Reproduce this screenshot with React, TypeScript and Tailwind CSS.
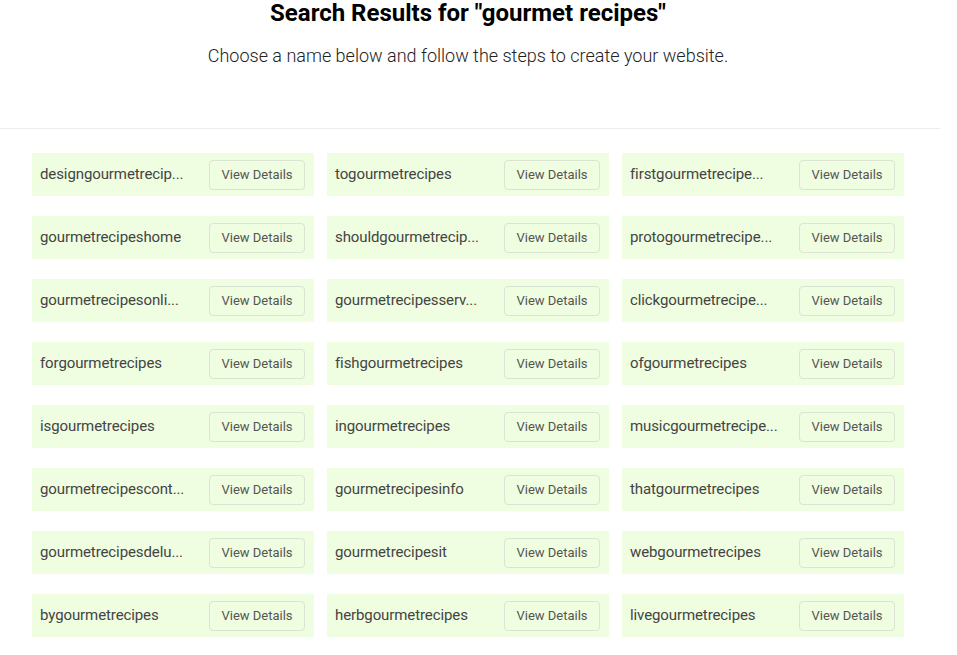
import React from "react";

const names: string[] = [
  "designgourmetrecip...",
  "togourmetrecipes",
  "firstgourmetrecipe...",
  "gourmetrecipeshome",
  "shouldgourmetrecip...",
  "protogourmetrecipe...",
  "gourmetrecipesonli...",
  "gourmetrecipesserv...",
  "clickgourmetrecipe...",
  "forgourmetrecipes",
  "fishgourmetrecipes",
  "ofgourmetrecipes",
  "isgourmetrecipes",
  "ingourmetrecipes",
  "musicgourmetrecipe...",
  "gourmetrecipescont...",
  "gourmetrecipesinfo",
  "thatgourmetrecipes",
  "gourmetrecipesdelu...",
  "gourmetrecipesit",
  "webgourmetrecipes",
  "bygourmetrecipes",
  "herbgourmetrecipes",
  "livegourmetrecipes",
];

export default function App() {
  return (
    <div
      className="w-[957px] h-[655px] bg-white overflow-hidden"
      style={{ fontFamily: "Roboto, 'Liberation Sans', sans-serif" }}
    >
      <div className="w-[940px]">
        <div className="w-[936px] pt-[1px]">
          <h1 className="text-center text-[24px] leading-[24px] font-bold text-black">
            Search Results for "gourmet recipes"
          </h1>
          <p className="mt-[22px] text-center text-[18px] leading-[18px] font-light text-[#222]">
            Choose a name below and follow the steps to create your website.
          </p>
        </div>
        <div className="mt-[63px] h-px bg-[#ececec]" />
        <div className="pt-[24px] pl-[32px] grid grid-cols-[282px_282px_282px] gap-x-[13px] gap-y-[20px]">
          {names.map((n) => (
            <div
              key={n}
              className="h-[43px] bg-[#effde0] flex items-center justify-between pl-[8px] pr-[9px]"
            >
              <span className="text-[15px] tracking-[-0.1px] text-[#444] whitespace-nowrap">{n}</span>
              <button className="w-[96px] h-[30px] rounded-[4px] border border-[#dbe3d2] text-[13px] text-[#555] bg-transparent">
                View Details
              </button>
            </div>
          ))}
        </div>
      </div>
    </div>
  );
}
